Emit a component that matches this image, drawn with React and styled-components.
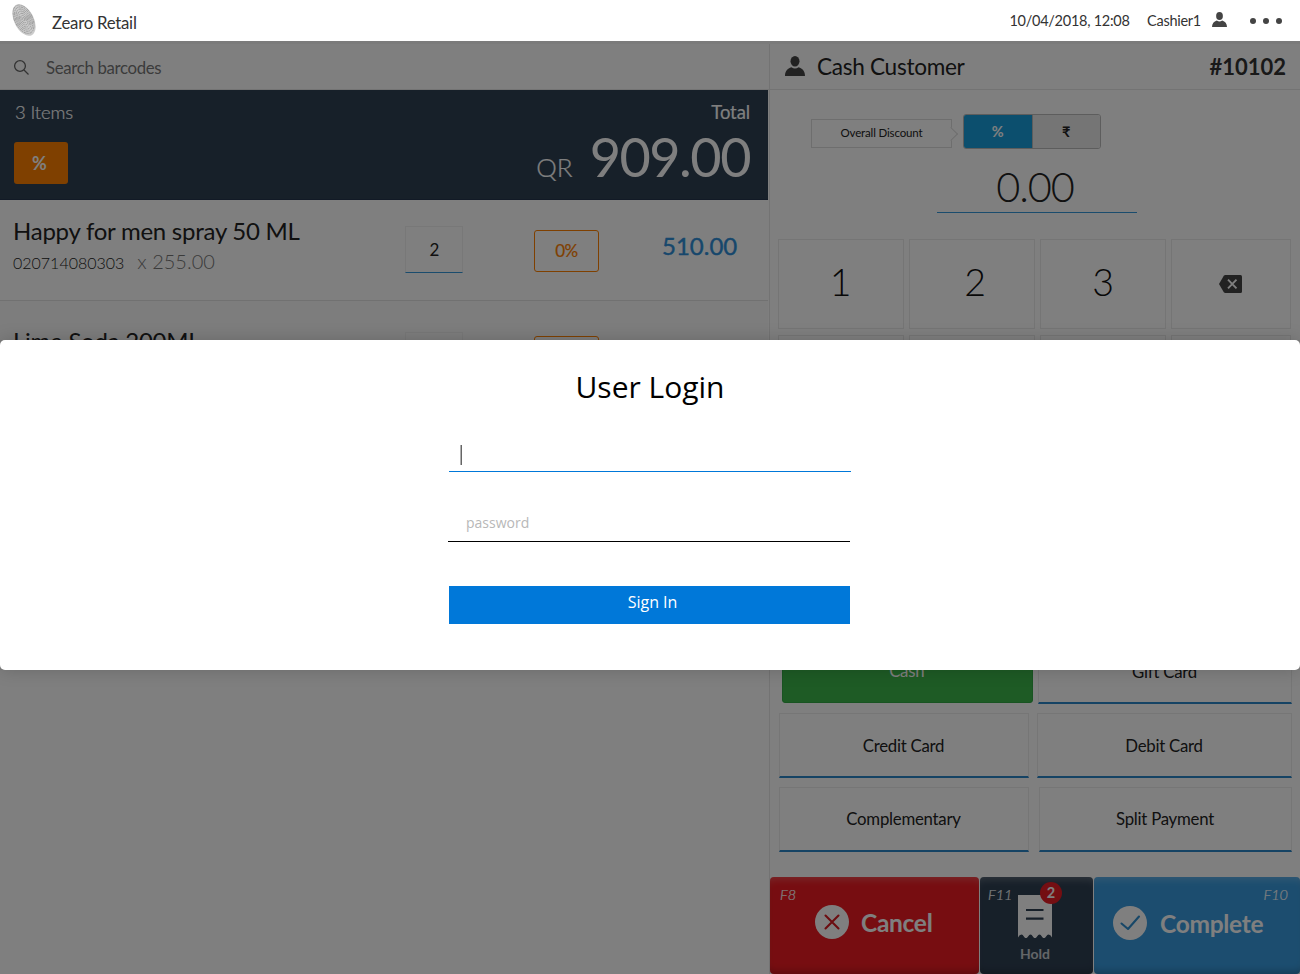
import React from 'react';
import styled, { createGlobalStyle, css } from 'styled-components';

const Global = createGlobalStyle`
  * { box-sizing: border-box; }
  body { margin: 0; background: #fff; font-family: Lato, "Liberation Sans", sans-serif; color: #333; }
  button, input { font-family: inherit; border: 0; padding: 0; margin: 0; background: none; }
`;

const Page = styled.div`
  position: relative;
  width: 1300px;
  height: 974px;
  overflow: hidden;
  display: flex;
  flex-direction: column;
`;

const TopBar = styled.header`
  height: 41px;
  flex: none;
  background: #fff;
  display: flex;
  align-items: center;
  padding: 0 18px 2px 11px;
`;
const Brand = styled.span`
  margin: 6px auto 0 14px;
  font-size: 16.8px;
  letter-spacing: -.25px;
  line-height: 20px;
  color: #333;
`;
const TopText = styled.span`
  font-size: 14.5px;
  letter-spacing: -.27px;
  line-height: 18px;
  color: #333;
  margin: 2px ${p => p.$gap}px 0 0;
`;
const Dots = styled.span`
  display: flex;
  gap: 7px;
  margin: 3px 0 0 23px;
  i { width: 6px; height: 6px; border-radius: 50%; background: #444; }
`;

const Body = styled.main`
  flex: 1;
  display: flex;
  border-top: 3px solid #f6f6f6;
  min-height: 0;
`;

const Cart = styled.section`
  width: 769px;
  flex: none;
`;
const Search = styled.div`
  height: 46px;
  display: flex;
  align-items: center;
  gap: 16px;
  padding: 1px 0 0 13px;
  color: #777;
  font-size: 16.8px;
  letter-spacing: -.32px;
  border-bottom: 1px solid #e8e8e8;
`;
const Summary = styled.div`
  width: 768px;
  height: 110px;
  background: #2f4053;
  border-bottom: 1px solid #24344c;
  display: flex;
  justify-content: space-between;
  color: #fff;
  padding: 11px 18px 0 14px;
`;
const SummaryLeft = styled.div`
  display: flex;
  flex-direction: column;
  gap: 19px;
`;
const ItemCount = styled.span`
  font-size: 18.5px;
  letter-spacing: -.15px;
  line-height: 22px;
  font-weight: 300;
  padding-left: 1px;
  -webkit-text-stroke: .2px currentColor;
`;
const PercentButton = styled.button`
  width: 54px;
  height: 42px;
  border-radius: 3px;
  background: #ff8000;
  color: #fff;
  font-size: 18px;
  font-weight: 700;
  padding: 0 3px 1px 0;
`;
const SummaryRight = styled.div`
  display: flex;
  flex-direction: column;
  align-items: flex-end;
`;
const TotalLabel = styled.span`
  font-size: 18.5px;
  letter-spacing: -.1px;
  line-height: 20px;
  padding-top: 1px;
  -webkit-text-stroke: .15px currentColor;
`;
const TotalRow = styled.div`
  display: flex;
  align-items: baseline;
  gap: 17px;
  line-height: 70px;
`;
const Currency = styled.span`
  font-size: 26px;
  font-weight: 300;
  -webkit-text-stroke: .2px currentColor;
`;
const Amount = styled.span`
  font-size: 54px;
  letter-spacing: -1.5px;
`;

const Item = styled.div`
  height: ${p => p.$h}px;
  width: 768px;
  padding: ${p => p.$top}px 0 0 13px;
  background: ${p => p.$bg};
  border-bottom: 1px solid #e2e2e2;
  display: flex;
  align-items: flex-start;
`;
const ItemInfo = styled.div`
  width: 392px;
  margin-top: ${p => p.$shift}px;
`;
const ItemName = styled.div`
  font-size: 24px;
  letter-spacing: -.25px;
  line-height: 32px;
  color: #222;
  white-space: nowrap;
`;
const ItemMeta = styled.div`
  display: flex;
  align-items: baseline;
  gap: 13px;
  line-height: 28px;
  font-size: 16px;
  font-weight: 300;
  color: #222;
`;
const UnitPrice = styled.span`
  font-size: 20px;
  color: #777;
`;
const Quantity = styled.div`
  width: 58px;
  height: 47px;
  margin-top: -3px;
  padding-left: 1px;
  border: 1px solid #f0f0f0;
  border-bottom: 1px solid #3498db;
  font-size: 17px;
  color: #222;
  display: flex;
  align-items: center;
  justify-content: center;
`;
const DiscountTag = styled.div`
  width: 65px;
  height: 42px;
  margin: 1px 63px 0 71px;
  padding-bottom: 2px;
  border: 1px solid #ff8000;
  border-radius: 3px;
  color: #ff8000;
  font-size: 17px;
  letter-spacing: -.5px;
  -webkit-text-stroke: .2px currentColor;
  display: flex;
  align-items: center;
  justify-content: center;
`;
const LineTotal = styled.div`
  font-size: 24px;
  line-height: 34px;
  color: #2f8fd8;
  -webkit-text-stroke: .4px currentColor;
`;

const Side = styled.aside`
  flex: 1;
  border-left: 1px solid #e6e6e6;
  display: flex;
  flex-direction: column;
`;
const CustomerBar = styled.div`
  height: 46px;
  flex: none;
  border-bottom: 1px solid #e6e6e6;
  display: flex;
  align-items: center;
  padding: 0 14px 1px 15px;
  font-size: 22.6px;
  letter-spacing: -.3px;
  color: #222;
`;
const CustomerName = styled.span`
  margin-left: 12px;
  flex: 1;
`;
const OrderNo = styled.b`
  color: #333;
  font-size: 22px;
  letter-spacing: 0;
`;
const DiscountRow = styled.div`
  display: flex;
  height: 35px;
  margin: 24px 0 0 41px;
  flex: none;
`;
const Callout = styled.div`
  position: relative;
  width: 141px;
  height: 29px;
  margin: 5px 11px 0 0;
  padding-bottom: 2px;
  border: 1px solid #ddd;
  font-size: 11.5px;
  letter-spacing: -.15px;
  color: #222;
  display: flex;
  align-items: center;
  justify-content: center;
  &::after {
    content: '';
    position: absolute;
    right: -5px;
    top: 9px;
    width: 9px;
    height: 9px;
    background: #fff;
    border: solid #ddd;
    border-width: 1px 1px 0 0;
    transform: rotate(45deg);
  }
`;
const Toggle = styled.div`
  width: 138px;
  height: 35px;
  border: 1px solid #bbb;
  border-radius: 3px;
  overflow: hidden;
  display: flex;
`;
const ToggleOption = styled.button`
  flex: 1;
  padding-bottom: 1px;
  font-size: 14.5px;
  font-weight: 700;
  background: ${p => (p.$on ? '#189fdc' : '#ebebeb')};
  color: ${p => (p.$on ? '#fff' : '#222')};
  border-left: ${p => (p.$on ? '0' : '1px solid #bbb')};
`;
const Entry = styled.div`
  width: 200px;
  height: 64px;
  flex: none;
  margin-left: 166.5px;
  padding-right: 3px;
  border-bottom: 1px solid #3498db;
  font-size: 41.5px;
  letter-spacing: -1.1px;
  font-weight: 300;
  line-height: 74px;
  text-align: center;
  color: #222;
`;
const Keypad = styled.div`
  display: grid;
  grid-template-columns: 126px 126px 126px 120px;
  grid-auto-rows: 90px;
  gap: 6px 5px;
  margin: 26px 0 0 8px;
  height: 400px;
  flex: none;
`;
const Key = styled.button`
  border: 1px solid #eaeaea;
  font-size: 37.5px;
  font-weight: 300;
  color: #111;
  display: flex;
  align-items: center;
  justify-content: center;
  padding: 0 ${p => p.$back || 0}px ${p => p.$lift || 0}px ${p => p.$nudge || 0}px;
`;
const Payments = styled.div`
  display: flex;
  flex-direction: column;
  gap: 9px;
  height: 238px;
  flex: none;
  padding-left: 9px;
`;
const PaymentRow = styled.div`
  display: flex;
  justify-content: space-between;
  padding-right: 8px;
`;
const Payment = styled.button`
  width: ${p => p.$w}px;
  height: 65px;
  border: 1px solid #ececec;
  border-bottom: 2px solid #2a86c8;
  font-size: 16.8px;
  letter-spacing: -.25px;
  padding: 0 1px ${p => p.$lift || 0}px 0;
  color: #222;
  ${p => p.$active && css`
    margin-left: 3px;
    background: #3cb64a;
    border: 1px solid #32a844;
    border-radius: 3px;
    color: #fff;
    padding-bottom: 1px;
    height: 64px;
  `}
`;
const Actions = styled.div`
  display: flex;
  gap: 1px;
  height: 97px;
  flex: none;
`;
const Action = styled.button`
  position: relative;
  width: ${p => p.$w}px;
  background: ${p => p.$bg};
  color: #fff;
  border-radius: 4px;
  box-shadow: inset 0 7px 7px -4px rgba(255,255,255,.22), inset 0 -7px 7px -4px rgba(0,0,0,.22);
  font-size: 24.5px;
  letter-spacing: -.3px;
  font-weight: 700;
  display: flex;
  align-items: center;
  padding: 0 0 ${p => p.$lift}px ${p => p.$pad}px;
  gap: ${p => p.$gap}px;
`;
const HoldAction = styled(Action)`
  flex-direction: column;
  font-size: 14px;
  letter-spacing: 0;
  padding: 18px 3px 0 0;
  gap: 6px;
`;
const HoldLabel = styled.span`
  color: #c8ccd1;
`;
const Shortcut = styled.span`
  position: absolute;
  top: 9px;
  ${p => p.$side}: ${p => p.$inset}px;
  font-size: 14.5px;
  letter-spacing: 0;
  line-height: 18px;
  font-weight: 300;
  font-style: italic;
  -webkit-text-stroke: .2px currentColor;
`;
const Badge = styled.span`
  position: absolute;
  left: 60px;
  top: 5px;
  width: 22px;
  height: 22px;
  border-radius: 50%;
  background: #e81c24;
  font-size: 14.5px;
  line-height: 21px;
  text-align: center;
`;

const Scrim = styled.div`
  position: absolute;
  inset: 41px 0 0 0;
  background: rgba(0, 0, 0, .5);
  display: flex;
  flex-direction: column;
`;
const Dialog = styled.form`
  margin-top: 299px;
  height: 330px;
  background: #fff;
  border-radius: 5px;
  box-shadow: 0 0 18px rgba(0, 0, 0, .18);
  font-family: "Open Sans", sans-serif;
  display: flex;
  flex-direction: column;
  align-items: center;
`;
const Title = styled.h1`
  margin: 27px 0 0;
  font-size: 30px;
  line-height: 40px;
  font-weight: 400;
  color: #000;
`;
const Field = styled.div`
  width: 402px;
  height: ${p => p.$h}px;
  margin-left: ${p => p.$shift}px;
  border-bottom: 1px solid ${p => p.$line};
  display: flex;
  align-items: flex-end;
`;
const Caret = styled.span`
  width: 2px;
  height: 20px;
  margin: 0 0 6px 11px;
  background: linear-gradient(to right, #b0b0b0 50%, #666 50%);
`;
const Placeholder = styled.span`
  margin: 0 0 8px 18px;
  font-size: 14px;
  line-height: 20px;
  color: #b8b8b8;
`;
const SignIn = styled.button`
  width: 401px;
  height: 38px;
  margin: 44px 1px 0 0;
  background: #0078d9;
  color: #fff;
  font-size: 16px;
  line-height: 22px;
  padding: 0 0 7px 6px;
`;

const UserIcon = ({ w, h, color }) => (
  <svg width={w} height={h} viewBox="0 0 20 20" preserveAspectRatio="none" fill={color}>
    <ellipse cx="10" cy="5.3" rx="4.5" ry="5.3" />
    <path d="M0 20C0 15 2.5 12.6 6.4 11.2Q10 14 13.6 11.2C17.5 12.6 20 15 20 20Z" />
  </svg>
);
const Fingerprint = () => (
  <svg width="27" height="34" viewBox="0 0 27 34">
    <defs><clipPath id="print"><ellipse cx="13" cy="17" rx="9.8" ry="17" transform="rotate(-27 13 17)" /></clipPath></defs>
    <g clipPath="url(#print)">
      <rect width="27" height="34" fill="#cbcbcb" />
      <g fill="none" stroke="#888" strokeWidth=".6" transform="rotate(-27 13 17)">
        {[1, 2.3, 3.6, 4.9, 6.2, 7.5, 8.8].map(r => <ellipse key={r} cx="13" cy="16" rx={r} ry={r * 1.75} strokeDasharray="3 .8 1.4 .6" />)}
      </g>
    </g>
  </svg>
);
const SearchIcon = () => (
  <svg width="17" height="17" viewBox="0 0 17 17" fill="none" stroke="#666" strokeWidth="1.3">
    <circle cx="7" cy="7" r="5.4" /><path d="M11 11L15.5 15.5" />
  </svg>
);
const BackspaceIcon = () => (
  <svg width="23" height="18" viewBox="0 0 23 18">
    <path d="M6.3 0H21.5Q23 0 23 1.5V16.5Q23 18 21.5 18H6.3Q5.4 18 4.8 17.2L0 9L4.8 .8Q5.4 0 6.3 0Z" fill="#444" />
    <path d="M9 4.7L17.5 13.3M17.5 4.7L9 13.3" stroke="#fff" strokeWidth="1.9" />
  </svg>
);
const CircleIcon = ({ d, color }) => (
  <svg width="34" height="34" viewBox="0 0 34 34">
    <circle cx="17" cy="17" r="17" fill="#fff" />
    <path d={d} fill="none" stroke={color} strokeWidth="2.1" strokeLinecap="round" strokeLinejoin="round" />
  </svg>
);
const ReceiptIcon = () => (
  <svg width="34" height="44" viewBox="0 0 34 44">
    <path d="M0 0H34V42.5Q32.5 39.4 30.5 39.4C28.5 39.4 28 43 26 43C24 43 23.5 39.4 21.5 39.4C19.5 39.4 19 43 17 43C15 43 14.5 39.4 12.5 39.4C10.5 39.4 10 43 8 43C6 43 5.5 39.4 3.5 39.4Q1.5 39.4 0 42.5Z" fill="#fff" />
    <path d="M8 15H25.5M8 23.7H25.5" stroke="#2f4053" strokeWidth="2.2" />
  </svg>
);

export default function App() {
  return (
    <Page>
      <Global />
      <TopBar>
        <Fingerprint />
        <Brand>Zearo Retail</Brand>
        <TopText $gap={17.5}>10/04/2018, 12:08</TopText>
        <TopText $gap={11}>Cashier1</TopText>
        <UserIcon w={15} h={15} color="#444" />
        <Dots><i /><i /><i /></Dots>
      </TopBar>
      <Body>
        <Cart>
          <Search><SearchIcon />Search barcodes</Search>
          <Summary>
            <SummaryLeft>
              <ItemCount>3 Items</ItemCount>
              <PercentButton>%</PercentButton>
            </SummaryLeft>
            <SummaryRight>
              <TotalLabel>Total</TotalLabel>
              <TotalRow><Currency>QR</Currency><Amount>909.00</Amount></TotalRow>
            </SummaryRight>
          </Summary>
          <Item $h={101} $top={29} $bg="#fff">
            <ItemInfo $shift={-14}>
              <ItemName>Happy for men spray 50 ML</ItemName>
              <ItemMeta>020714080303<UnitPrice>x 255.00</UnitPrice></ItemMeta>
            </ItemInfo>
            <Quantity>2</Quantity>
            <DiscountTag>0%</DiscountTag>
            <LineTotal>510.00</LineTotal>
          </Item>
          <Item $h={106} $top={34} $bg="#fbfbfb">
            <ItemInfo $shift={-10}><ItemName>Lime Soda 200ML</ItemName></ItemInfo>
            <Quantity />
            <DiscountTag />
          </Item>
        </Cart>
        <Side>
          <CustomerBar>
            <UserIcon w={20} h={20} color="#444" />
            <CustomerName>Cash Customer</CustomerName>
            <OrderNo>#10102</OrderNo>
          </CustomerBar>
          <DiscountRow>
            <Callout>Overall Discount</Callout>
            <Toggle><ToggleOption $on>%</ToggleOption><ToggleOption>₹</ToggleOption></Toggle>
          </DiscountRow>
          <Entry>0.00</Entry>
          <Keypad>
            <Key $lift={5} $back={1}>1</Key><Key $lift={5} $nudge={6}>2</Key><Key $lift={5}>3</Key><Key $back={2}><BackspaceIcon /></Key>
            <Key /><Key /><Key /><Key />
          </Keypad>
          <Payments>
            <PaymentRow><Payment $w={250.5} $active>Cash</Payment><Payment $w={254}>Gift Card</Payment></PaymentRow>
            <PaymentRow><Payment $w={250}>Credit Card</Payment><Payment $w={255}>Debit Card</Payment></PaymentRow>
            <PaymentRow><Payment $w={250} $lift={2}>Complementary</Payment><Payment $w={253} $lift={2}>Split Payment</Payment></PaymentRow>
          </Payments>
          <Actions>
            <Action $w={209} $bg="#ee1b22" $pad={45} $lift={7} $gap={12}>
              <Shortcut $side="left" $inset={10}>F8</Shortcut>
              <CircleIcon color="#d81b22" d="M10.5 10.5L23.5 23.5M23.5 10.5L10.5 23.5" />Cancel
            </Action>
            <HoldAction $w={113} $bg="#2f4053">
              <Shortcut $side="left" $inset={8}>F11</Shortcut>
              <ReceiptIcon /><HoldLabel>Hold</HoldLabel>
              <Badge>2</Badge>
            </HoldAction>
            <Action $w={206} $bg="#389bdf" $pad={19} $lift={5} $gap={13}>
              <Shortcut $side="right" $inset={12}>F10</Shortcut>
              <CircleIcon color="#2f8fd0" d="M8.5 17.5L15 23L26 10.5" />Complete
            </Action>
          </Actions>
        </Side>
      </Body>
      <Scrim>
        <Dialog>
          <Title>User Login</Title>
          <Field $h={65} $shift={0} $line="#0078d9"><Caret /></Field>
          <Field $h={70} $shift={-2} $line="#000"><Placeholder>password</Placeholder></Field>
          <SignIn type="button">Sign In</SignIn>
        </Dialog>
      </Scrim>
    </Page>
  );
}
